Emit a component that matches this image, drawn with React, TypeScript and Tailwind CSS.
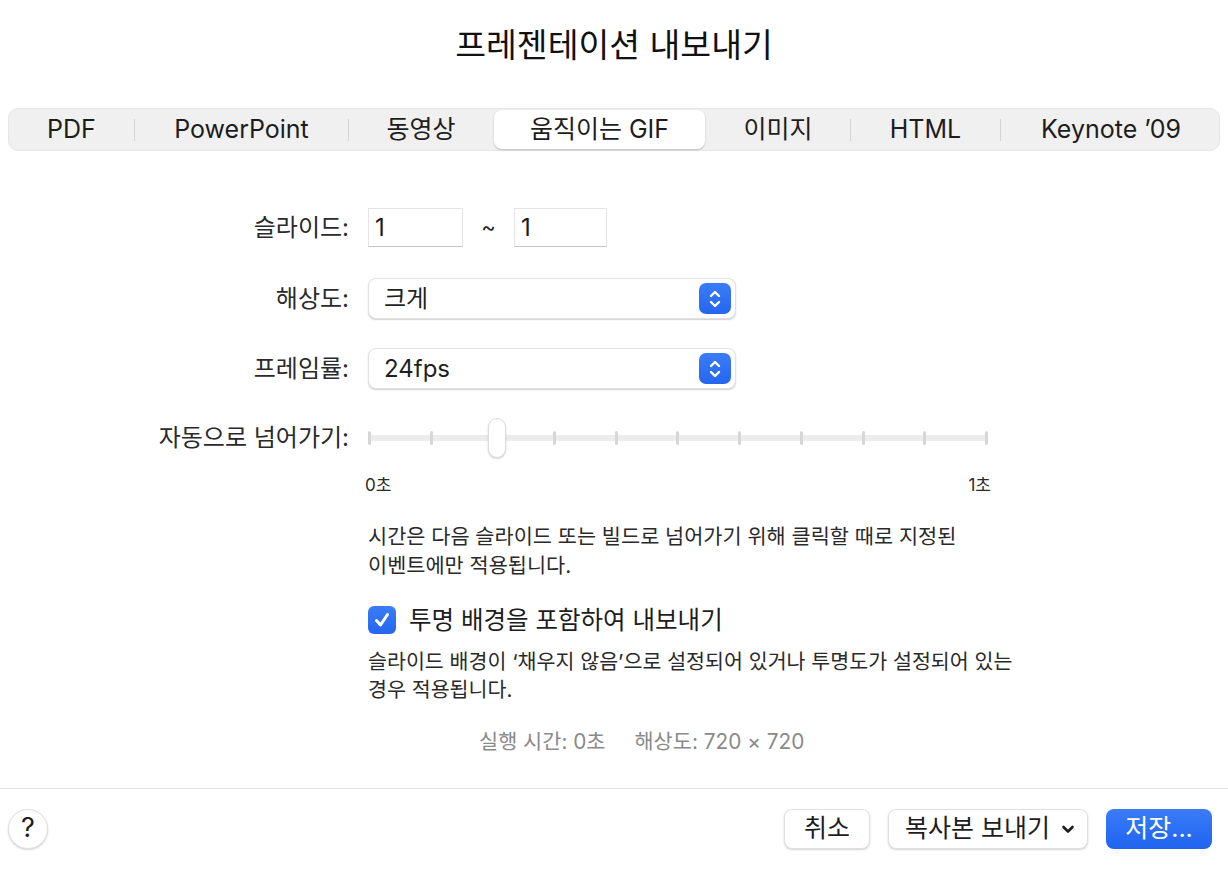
import { useState } from 'react'

const TABS = [
  { id: 'pdf', label: 'PDF', w: 'w-[125px]' },
  { id: 'ppt', label: 'PowerPoint', w: 'w-[213px]' },
  { id: 'movie', label: '동영상', w: 'w-[144px]' },
  { id: 'gif', label: '움직이는 GIF', w: 'w-[211px]' },
  { id: 'image', label: '이미지', w: 'w-[144px]' },
  { id: 'html', label: 'HTML', w: 'w-[149px]' },
  { id: 'keynote', label: 'Keynote ’09', w: 'w-[220px]' },
] as const

type TabId = typeof TABS[number]['id']

function Stepper() {
  return (
    <div className="w-[32px] h-[31px] rounded-[7px] bg-gradient-to-b from-[#3a7cf8] to-[#2566ee] flex items-center justify-center">
      <svg width="14" height="22" viewBox="0 0 14 22" fill="none" stroke="white" strokeWidth="2.4" strokeLinecap="round" strokeLinejoin="round">
        <path d="M3 8 L7 4 L11 8" />
        <path d="M3 14 L7 18 L11 14" />
      </svg>
    </div>
  )
}

function Popup({ value }: { value: string }) {
  return (
    <div className="w-[368px] h-[41px] rounded-[8px] bg-white border border-[#e2e2e2] shadow-[0_1px_1.5px_rgba(0,0,0,0.2)] flex items-center justify-between pl-[15px] pr-[4px]">
      <span className="text-[24px] leading-[30px] text-[#1f1f1f]">{value}</span>
      <Stepper />
    </div>
  )
}

function NumField({ value, w }: { value: string; w: string }) {
  return (
    <div className={`${w} h-[39px] bg-white border border-[#e4e4e4] border-b-[#c4c4c4] flex items-center pl-[6px] text-[24px] text-[#1a1a1a]`}>
      {value}
    </div>
  )
}

function Label({ children }: { children: string }) {
  return <div className="w-[350px] text-right text-[24px] leading-[30px] text-[#2a2a2a] pr-[1px]">{children}</div>
}

function Slider() {
  const ticks = Array.from({ length: 11 }, (_, i) => i)
  return (
    <div className="relative w-[620px] h-[40px]">
      <div className="absolute left-0 right-0 top-[17px] h-[6px] bg-[#ececec] rounded-full" />
      <div className="absolute inset-0 flex justify-between items-center">
        {ticks.map((t) => (
          <div key={t} className="w-[3px] h-[14px] rounded-full bg-[#d6d6d6]" />
        ))}
      </div>
      <div className="absolute left-[120px] top-0 w-[18px] h-[40px] rounded-full bg-white border border-[#dcdcdc] shadow-[0_1px_2px_rgba(0,0,0,0.18)]" />
    </div>
  )
}

export default function App() {
  const [active, setActive] = useState<TabId>('gif')
  const activeIdx = TABS.findIndex((t) => t.id === active)

  return (
    <div className="w-[1228px] h-[872px] bg-white flex flex-col font-['Inter','Noto_Sans_CJK_KR',sans-serif] text-[#1d1d1d]">
      {/* Title */}
      <div className="pt-[24px] h-[64px] text-center text-[33.5px] leading-[42px] text-[#111]">프레젠테이션 내보내기</div>

      {/* Tabs */}
      <div className="mt-[44px] mx-[8px] h-[43px] rounded-[10px] bg-[#f0f0f0] border border-[#e6e6e6] flex items-center">
        {TABS.map((tab, i) => (
          <div key={tab.id} className="flex items-center h-full">
            {i > 0 && (
              <div
                className={
                  i === activeIdx || i - 1 === activeIdx
                    ? 'w-px h-[22px] bg-transparent'
                    : 'w-px h-[22px] bg-[#d4d4d4]'
                }
              />
            )}
            <button
              onClick={() => setActive(tab.id)}
              className={`${tab.w} h-full flex items-center justify-center text-[25px] text-[#1d1d1d]`}
            >
              <span
                className={
                  i === activeIdx
                    ? 'w-full h-[39px] flex items-center justify-center rounded-[8px] bg-white shadow-[0_1px_2px_rgba(0,0,0,0.22)]'
                    : 'flex items-center justify-center'
                }
              >
                {tab.label}
              </span>
            </button>
          </div>
        ))}
      </div>

      {/* Form */}
      <div className="flex flex-col mt-[57px]">
        <div className="flex items-center gap-[18px] h-[39px]">
          <Label>슬라이드:</Label>
          <div className="flex items-center">
            <NumField value="1" w="w-[95px]" />
            <span className="w-[51px] text-center text-[22px] text-[#2a2a2a]">~</span>
            <NumField value="1" w="w-[93px]" />
          </div>
        </div>

        <div className="flex items-center gap-[18px] mt-[31px]">
          <Label>해상도:</Label>
          <Popup value="크게" />
        </div>

        <div className="flex items-center gap-[18px] mt-[29px]">
          <Label>프레임률:</Label>
          <Popup value="24fps" />
        </div>

        <div className="flex items-center gap-[18px] mt-[29px]">
          <Label>자동으로 넘어가기:</Label>
          <Slider />
        </div>

        <div className="ml-[365px] w-[626px] flex justify-between text-[17px] text-[#2a2a2a] mt-[17px] leading-[20px]">
          <span>0초</span>
          <span>1초</span>
        </div>

        <div className="ml-[368px] mt-[27px] text-[20.8px] leading-[29px] text-[#2a2a2a]">
          시간은 다음 슬라이드 또는 빌드로 넘어가기 위해 클릭할 때로 지정된
          <br />
          이벤트에만 적용됩니다.
        </div>

        <div className="ml-[368px] mt-[25px] flex items-center gap-[13px]">
          <div className="w-[28px] h-[28px] rounded-[6px] bg-gradient-to-b from-[#3a7cf8] to-[#2566ee] flex items-center justify-center">
            <svg width="20" height="20" viewBox="0 0 20 20" fill="none" stroke="white" strokeWidth="3" strokeLinecap="round" strokeLinejoin="round">
              <path d="M4.5 10.5 L8.5 15 L15.5 4.5" />
            </svg>
          </div>
          <span className="text-[24.5px] leading-[30px] text-[#1d1d1d]">투명 배경을 포함하여 내보내기</span>
        </div>

        <div className="ml-[368px] mt-[13px] text-[20.6px] leading-[28px] text-[#2a2a2a]">
          슬라이드 배경이 ‘채우지 않음’으로 설정되어 있거나 투명도가 설정되어 있는
          <br />
          경우 적용됩니다.
        </div>

        <div className="ml-[479px] mt-[24px] flex gap-[29px] text-[20.8px] leading-[28px] text-[#8a8a8a]">
          <span>실행 시간: 0초</span>
          <span>해상도: 720 × 720</span>
        </div>
      </div>

      <div className="flex-1" />

      {/* Footer */}
      <div className="border-t border-[#e3e3e3] h-[84px] flex items-center px-[8px] pb-[4px]">
        <button className="w-[40px] h-[40px] rounded-full bg-white border border-[#e0e0e0] shadow-[0_1px_2px_rgba(0,0,0,0.18)] flex items-center justify-center text-[27px] text-[#1d1d1d]">
          ?
        </button>
        <div className="flex-1" />
        <div className="flex items-center gap-[18px] pr-[8px]">
          <button className="w-[86px] h-[40px] rounded-[8px] bg-white border border-[#e0e0e0] shadow-[0_1px_2px_rgba(0,0,0,0.18)] text-[25px] text-[#1d1d1d]">
            취소
          </button>
          <button className="w-[200px] h-[40px] rounded-[8px] bg-white border border-[#e0e0e0] shadow-[0_1px_2px_rgba(0,0,0,0.18)] text-[25px] text-[#1d1d1d] flex items-center pl-[16px] pr-[12px] justify-between">
            <span>복사본 보내기</span>
            <svg width="14" height="10" viewBox="0 0 14 10" fill="none" stroke="#1d1d1d" strokeWidth="2.6" strokeLinecap="round" strokeLinejoin="round">
              <path d="M2.5 3 L7 7.5 L11.5 3" />
            </svg>
          </button>
          <button className="w-[106px] h-[40px] rounded-[8px] bg-gradient-to-b from-[#3a7cf8] to-[#1f63f0] text-[25px] text-white">
            저장...
          </button>
        </div>
      </div>
    </div>
  )
}
